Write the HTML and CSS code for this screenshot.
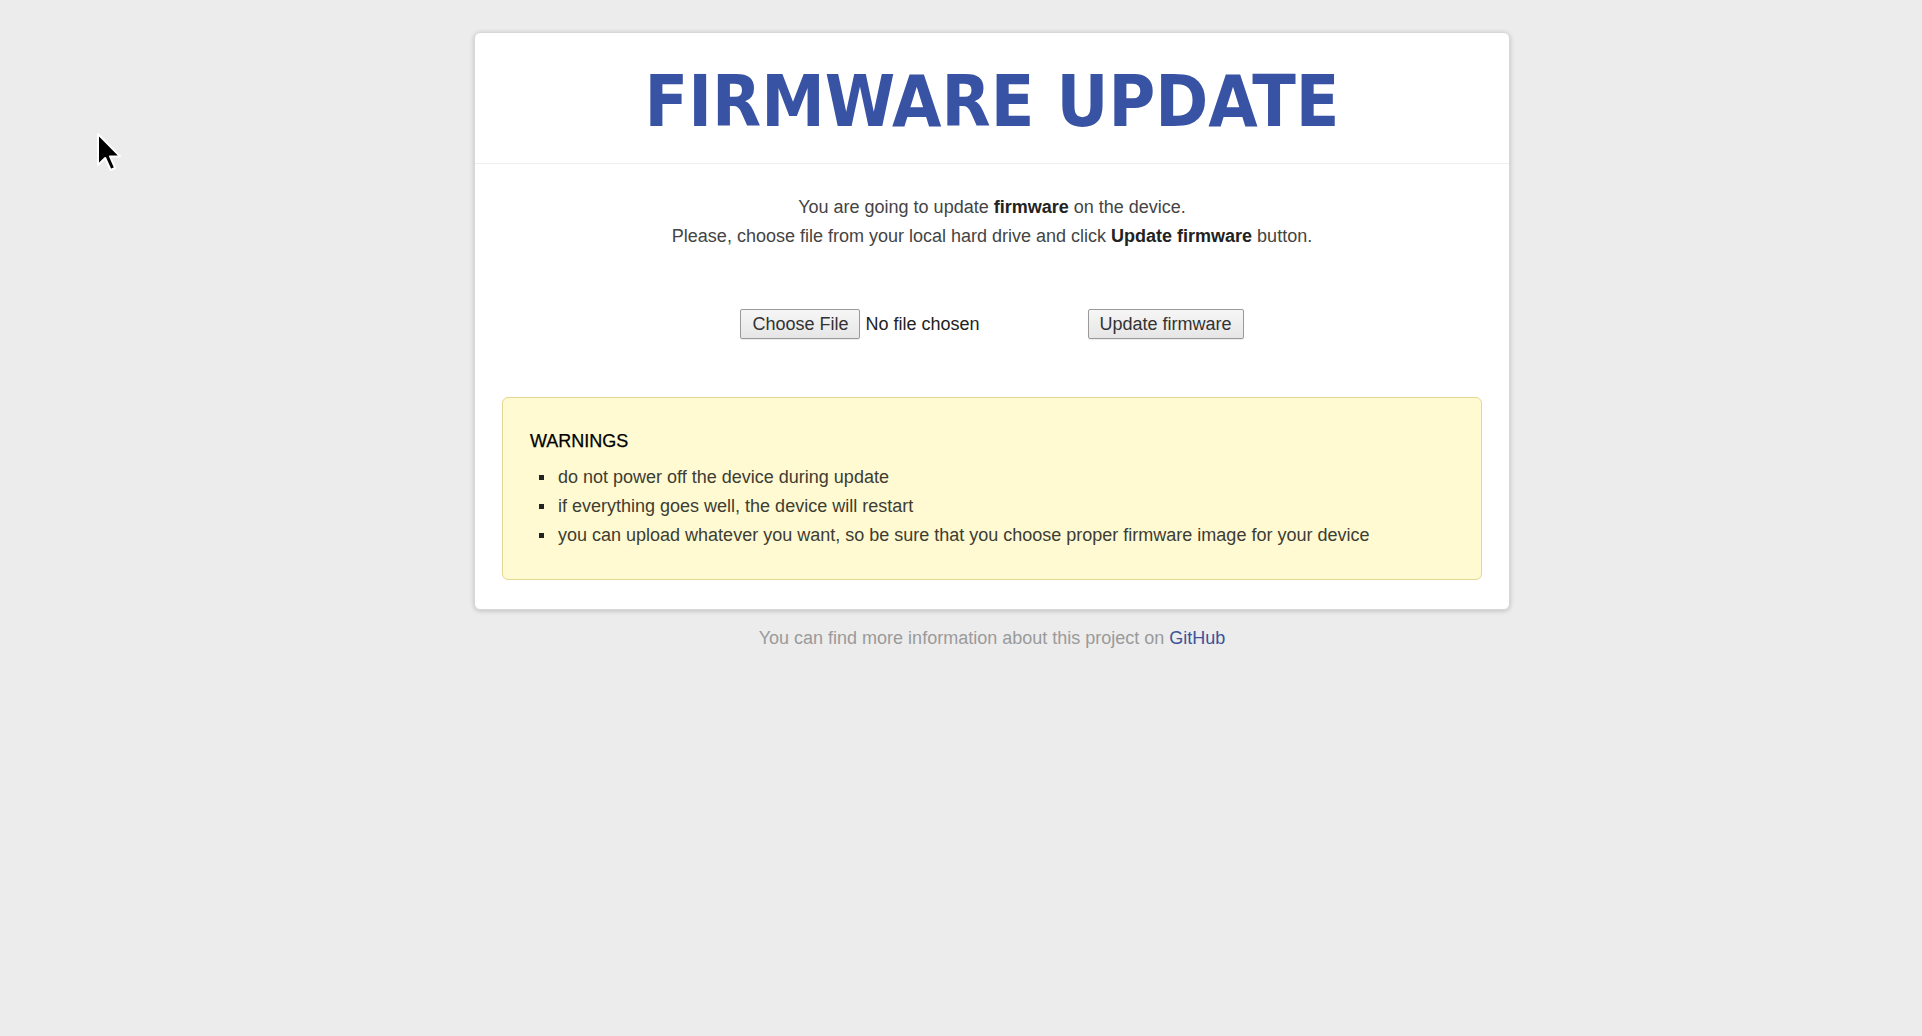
FILE: index.html
```html
<!DOCTYPE html>
<html lang="en">
<head>
<meta charset="utf-8">
<title>Firmware update</title>
<link rel="stylesheet" href="styles.css">
</head>
<body>
<div class="wrap">
  <div class="card">
    <div class="card-header">
      <h1 class="title">FIRMWARE UPDATE</h1>
    </div>
    <div class="card-body">
      <p class="intro">You are going to update <b>firmware</b> on the device.<br>Please, choose file from your local hard drive and click <b>Update firmware</b> button.</p>
      <form class="upload" onsubmit="return false">
        <span class="file-field">
          <span class="btn">Choose File</span>
          <span class="nofile">No file chosen</span>
        </span>
        <button class="btn btn-update" type="submit">Update firmware</button>
      </form>
      <div class="warning">
        <div class="warning-title">WARNINGS</div>
        <ul class="warning-list">
          <li>do not power off the device during update</li>
          <li>if everything goes well, the device will restart</li>
          <li>you can upload whatever you want, so be sure that you choose proper firmware image for your device</li>
        </ul>
      </div>
    </div>
  </div>
  <p class="footer">You can find more information about this project on <a href="#">GitHub</a></p>
</div>
<svg class="cursor" width="28" height="40" viewBox="0 0 14 20" xmlns="http://www.w3.org/2000/svg">
  <path d="M1 1 L1 16.5 L4.6 13 L7.3 19 L9.6 18 L7 12.2 L12 12.2 Z" fill="#000" stroke="#fff" stroke-width="1" stroke-linejoin="round"/>
</svg>
</body>
</html>
```
FILE: styles.css
```css
html, body {
  margin: 0;
  padding: 0;
}
body {
  background: #ececec;
  font-family: "Liberation Sans", Arial, sans-serif;
  color: #333;
  min-height: 1036px;
}
.wrap {
  padding: 32px 0 0 62px;
}
.card {
  width: 1036px;
  box-sizing: border-box;
  margin: 0 auto;
  background: #fff;
  border: 1px solid #d8d8d8;
  border-radius: 6px;
  box-shadow: 0 1px 5px rgba(0, 0, 0, 0.2);
}
.card-header {
  height: 130px;
  display: flex;
  align-items: center;
  justify-content: center;
  border-bottom: 1px solid #efefef;
}
.title {
  margin: 0;
  font-family: "DejaVu Sans", Verdana, sans-serif;
  font-stretch: condensed;
  font-weight: bold;
  font-size: 71px;
  line-height: 1;
  color: #3953a4;
  padding-top: 6px;
}
.card-body {
  padding: 29px 27px 29px;
}
.intro {
  margin: 0;
  text-align: center;
  font-size: 18px;
  line-height: 29px;
  color: #444;
}
.intro b {
  color: #222;
}
.upload {
  margin: 58px 0 0;
  display: flex;
  justify-content: center;
  align-items: center;
}
.file-field {
  display: flex;
  align-items: center;
}
.btn {
  box-sizing: border-box;
  height: 30px;
  padding: 0 11px;
  display: inline-flex;
  align-items: center;
  font-family: "Liberation Sans", Arial, sans-serif;
  font-size: 18px;
  color: #333;
  background: linear-gradient(#f6f6f6, #e6e6e6);
  border: 1px solid #9a9a9a;
  border-radius: 2px;
  box-shadow: 0 1px 1px rgba(0, 0, 0, 0.08);
}
.nofile {
  margin-left: 5px;
  font-size: 18px;
  color: #222;
}
.btn-update {
  margin-left: 108px;
}
.warning {
  margin-top: 58px;
  background: #fffad2;
  border: 1px solid #e6d690;
  border-radius: 6px;
  padding: 29px 27px 29px;
}
.warning-title {
  font-size: 18px;
  line-height: 29px;
  color: #000;
  -webkit-text-stroke: 0.25px #000;
}
.warning-list {
  margin: 7px 0 0;
  padding: 0 0 0 28px;
  list-style: none;
  font-size: 18px;
  line-height: 29px;
  color: #3d3d33;
}
.warning-list li::before {
  content: "";
  display: inline-block;
  width: 5px;
  height: 5px;
  background: #222;
  margin: 0 14px 0 -19px;
  vertical-align: middle;
  position: relative;
  top: -1px;
}
.footer {
  margin: 16px 0 0;
  text-align: center;
  font-size: 18px;
  line-height: 24px;
  color: #9a9a9a;
}
.footer a {
  color: #3d5299;
  text-decoration: none;
}
.cursor {
  position: absolute;
  left: 96px;
  top: 132px;
}
```
